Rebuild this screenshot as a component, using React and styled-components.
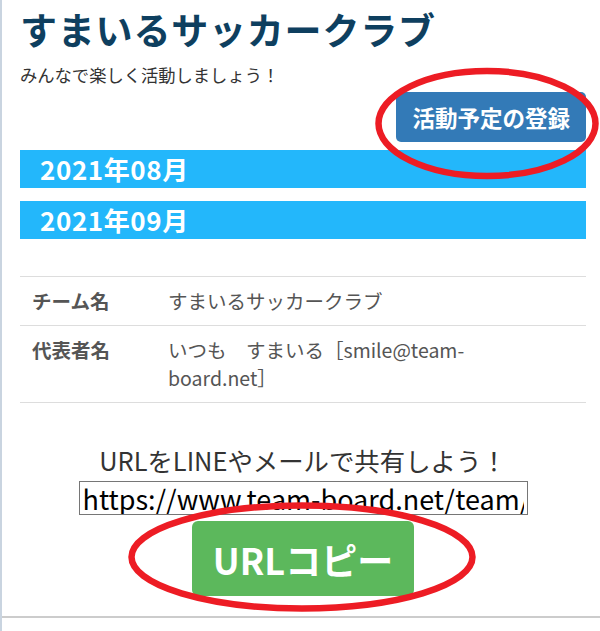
import React from "react";
import styled, { createGlobalStyle } from "styled-components";

const Global = createGlobalStyle`
  html, body { margin: 0; padding: 0; background: #fff; }
  body { font-family: "Noto Sans CJK JP", "Noto Sans", sans-serif; }
`;

const Page = styled.div`
  position: relative;
  min-height: 631px;
  box-sizing: border-box;
  border-left: 2px solid #c9d4e0;
  padding: 0 14px 0 18px;
  overflow: hidden;
`;

const Title = styled.h1`
  margin: 4px 0 0;
  font-size: 37px;
  line-height: 50px;
  font-weight: 700;
  color: #0e3f5f;
  letter-spacing: 0.8px;
`;

const Lead = styled.p`
  margin: 9px 0 0;
  font-size: 17.3px;
  line-height: 24px;
  color: #333;
`;

const ActionRow = styled.div`
  display: flex;
  justify-content: flex-end;
  margin-top: 5px;
`;

const PrimaryButton = styled.button`
  height: 50px;
  padding: 0 16px;
  border: none;
  border-radius: 5px;
  background: #337ab7;
  color: #fff;
  font-family: inherit;
  font-size: 22.5px;
  font-weight: 700;
`;

const MonthList = styled.div`
  display: flex;
  flex-direction: column;
  gap: 13px;
  margin-top: 8px;
`;

const MonthBar = styled.div`
  height: 38px;
  line-height: 38px;
  padding-left: 20px;
  background: #23b7fb;
  color: #fff;
  font-size: 26px;
  letter-spacing: 0.6px;
  font-weight: 700;
`;

const InfoTable = styled.div`
  margin-top: 37px;
  border-top: 1px solid #ddd;
`;

const InfoRow = styled.div`
  display: grid;
  grid-template-columns: 148px 1fr;
  border-bottom: 1px solid #ddd;
  padding: 10px 0;
  font-size: 19.5px;
  line-height: 28px;
  color: #555;
`;

const Label = styled.div`
  padding-left: 12px;
  font-weight: 700;
`;

const Value = styled.div`
  padding-right: 80px;
`;

const Share = styled.div`
  display: flex;
  flex-direction: column;
  align-items: center;
  margin-top: 40px;
`;

const ShareText = styled.div`
  font-size: 25.4px;
  line-height: 34px;
  color: #333;
`;

const UrlInput = styled.input`
  box-sizing: border-box;
  width: 449px;
  height: 34px;
  margin-top: 4px;
  padding: 0 3px;
  border: 1px solid #767676;
  font-family: "Noto Sans CJK JP", "Noto Sans", sans-serif;
  font-size: 27px;
  color: #000;
  outline: none;
`;

const CopyButton = styled.button`
  width: 222px;
  height: 75px;
  margin-top: 6px;
  border: none;
  border-radius: 6px;
  background: #5cb85c;
  color: #fff;
  font-family: inherit;
  font-size: 36px;
  font-weight: 700;
`;

const Footer = styled.div`
  margin: 20px -14px 0 -18px;
  border-top: 2px solid #cccccc;
`;

const Marks = styled.svg`
  position: absolute;
  left: -2px;
  top: 0;
  pointer-events: none;
`;

export default function App() {
  return (
    <>
      <Global />
      <Page>
        <Title>すまいるサッカークラブ</Title>
        <Lead>みんなで楽しく活動しましょう！</Lead>
        <ActionRow>
          <PrimaryButton>活動予定の登録</PrimaryButton>
        </ActionRow>
        <MonthList>
          <MonthBar>2021年08月</MonthBar>
          <MonthBar>2021年09月</MonthBar>
        </MonthList>
        <InfoTable>
          <InfoRow>
            <Label>チーム名</Label>
            <Value>すまいるサッカークラブ</Value>
          </InfoRow>
          <InfoRow>
            <Label>代表者名</Label>
            <Value>いつも　すまいる［smile@team-board.net］</Value>
          </InfoRow>
        </InfoTable>
        <Share>
          <ShareText>URLをLINEやメールで共有しよう！</ShareText>
          <UrlInput readOnly value="https://www.team-board.net/team/smile-soccer" />
          <CopyButton>URLコピー</CopyButton>
        </Share>
        <Footer />
        <Marks width="600" height="631" viewBox="0 0 600 631">
          <ellipse cx="487" cy="123.5" rx="108.5" ry="52.5" fill="none" stroke="#ed1c24" strokeWidth="6.5" />
          <ellipse cx="302" cy="557" rx="170.5" ry="51.5" fill="none" stroke="#ed1c24" strokeWidth="6.5" />
        </Marks>
      </Page>
    </>
  );
}
